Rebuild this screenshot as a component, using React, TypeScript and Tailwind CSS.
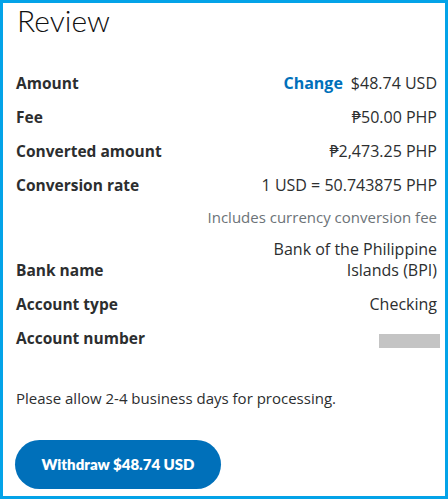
import React from "react";

const Row = ({ label, children, className = "" }: { label: string; children: React.ReactNode; className?: string }) => (
  <div className={`flex justify-between items-end leading-[21px] ${className}`}>
    <div className="font-bold text-[15.5px] text-[#2c2e2f] whitespace-nowrap">{label}</div>
    <div className="text-right text-[16px] text-[#2c2e2f]">{children}</div>
  </div>
);

export default function App() {
  return (
    <div
      className="w-[448px] h-[499px] border-[3px] border-[#03a3e8] bg-white pl-[13px] pr-[8px] flex flex-col overflow-hidden"
      style={{ fontFamily: "'Open Sans', 'Noto Sans', sans-serif" }}
    >
      <h1 className="text-[30px] font-light leading-[36px] -mt-[1px] text-[#111] pl-[1px]" style={{ fontFamily: "Lato, sans-serif" }}>
        Review
      </h1>
      <div className="mt-[35px] flex flex-col">
        <Row label="Amount">
          <span className="font-bold text-[#0070ba] mr-[8px]">Change</span>
          <span>$48.74 USD</span>
        </Row>
        <Row label="Fee" className="mt-[13px]">₱50.00 PHP</Row>
        <Row label="Converted amount" className="mt-[13px]">₱2,473.25 PHP</Row>
        <Row label="Conversion rate" className="mt-[13px]">1 USD = 50.743875 PHP</Row>
        <div className="mt-[11px] text-right text-[15px] leading-[21px] text-[#6c7378]">Includes currency conversion fee</div>
        <Row label="Bank name" className="mt-[11px]">
          Bank of the Philippine
          <br />
          Islands (BPI)
        </Row>
        <Row label="Account type" className="mt-[13px]">Checking</Row>
        <Row label="Account number" className="mt-[13px]">
          <div className="w-[61px] h-[14px] bg-[#c4c4c4] mb-[1px] -mr-[3px]" />
        </Row>
      </div>
      <p className="mt-[39px] text-[15px] leading-[21px] text-[#2c2e2f]">Please allow 2-4 business days for processing.</p>
      <button
        className="mt-[31px] w-[206px] h-[49px] shrink-0 rounded-full bg-[#0070ba] text-white font-extrabold text-[15px] ml-[-1px]"
        style={{ fontFamily: "Lato, sans-serif" }}
      >
        Withdraw $48.74 USD
      </button>
    </div>
  );
}
